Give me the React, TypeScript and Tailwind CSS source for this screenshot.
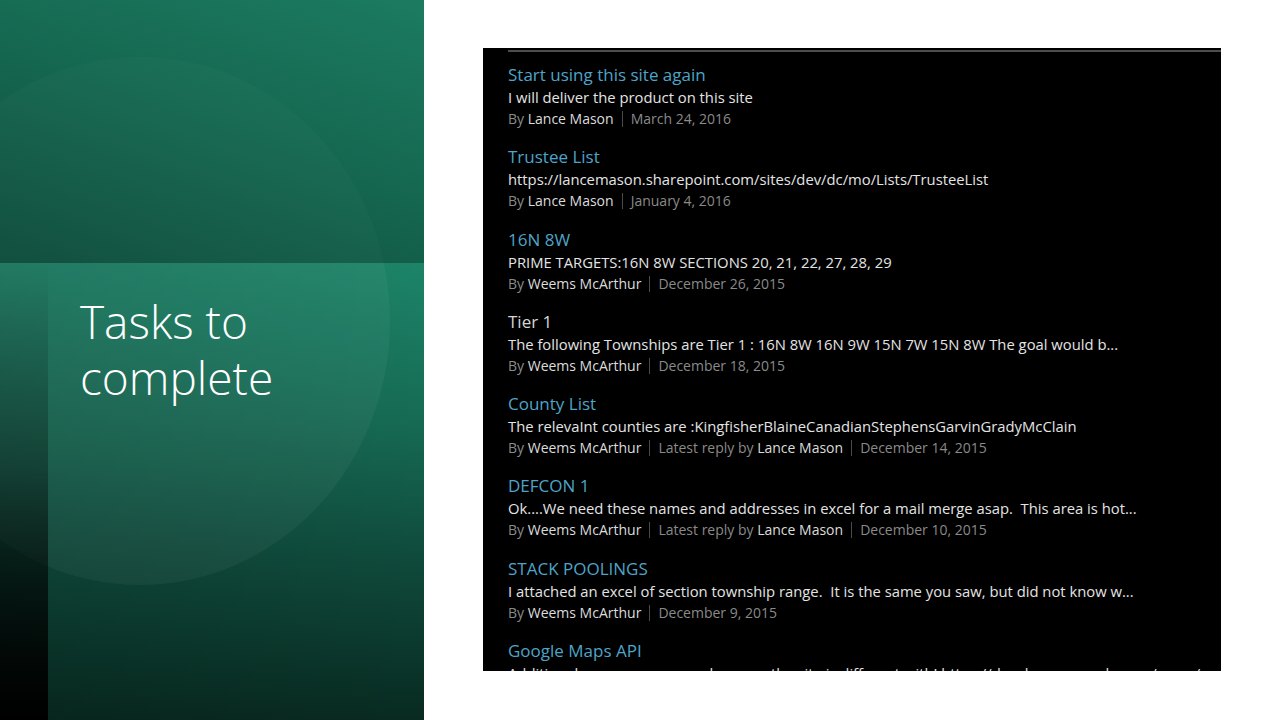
type Post = {
  title: string;
  body: string;
  author: string;
  reply?: string;
  date: string;
  muted?: boolean;
};

const posts: Post[] = [
  {
    title: 'Start using this site again',
    body: 'I will deliver the product on this site',
    author: 'Lance Mason',
    date: 'March 24, 2016',
  },
  {
    title: 'Trustee List',
    body: 'https://lancemason.sharepoint.com/sites/dev/dc/mo/Lists/TrusteeList',
    author: 'Lance Mason',
    date: 'January 4, 2016',
  },
  {
    title: '16N 8W',
    body: 'PRIME TARGETS:16N 8W SECTIONS 20, 21, 22, 27, 28, 29',
    author: 'Weems McArthur',
    date: 'December 26, 2015',
  },
  {
    title: 'Tier 1',
    body: 'The following Townships are Tier 1 : 16N 8W 16N 9W 15N 7W 15N 8W The goal would b...',
    author: 'Weems McArthur',
    date: 'December 18, 2015',
    muted: true,
  },
  {
    title: 'County List',
    body: 'The relevaInt counties are :KingfisherBlaineCanadianStephensGarvinGradyMcClain',
    author: 'Weems McArthur',
    reply: 'Lance Mason',
    date: 'December 14, 2015',
  },
  {
    title: 'DEFCON 1',
    body: 'Ok....We need these names and addresses in excel for a mail merge asap.  This area is hot...',
    author: 'Weems McArthur',
    reply: 'Lance Mason',
    date: 'December 10, 2015',
  },
  {
    title: 'STACK POOLINGS',
    body: 'I attached an excel of section township range.  It is the same you saw, but did not know w...',
    author: 'Weems McArthur',
    date: 'December 9, 2015',
  },
  {
    title: 'Google Maps API',
    body: 'Additional resources on google maps, the site is different with! https://developers.google.com/maps/',
    author: 'Weems McArthur',
    date: 'December 2, 2015',
  },
];

function Divider() {
  return <span className="mx-[8px] inline-block h-[16px] w-px bg-[#4a4a4a]" />;
}

function PostItem({ post }: { post: Post }) {
  return (
    <div className="mb-[16.3px]">
      <div className={`text-[17px] leading-[22px] ${post.muted ? 'text-[#d6d6d6]' : 'text-[#4ea4c9]'}`}>
        {post.title}
      </div>
      <div className="whitespace-pre text-[14.8px] leading-[22px] text-[#e4e4e4]">{post.body}</div>
      <div className="flex items-center text-[14px] leading-[22px] text-[#8a8a8a]">
        <span>
          By <span className="text-[#dcdcdc]">{post.author}</span>
        </span>
        {post.reply && (
          <>
            <Divider />
            <span>
              Latest reply by <span className="text-[#dcdcdc]">{post.reply}</span>
            </span>
          </>
        )}
        <Divider />
        <span>{post.date}</span>
      </div>
    </div>
  );
}

export default function App() {
  return (
    <div className="flex h-[720px] w-[1280px] overflow-hidden bg-white font-['Open_Sans',sans-serif]">
      {/* left title panel */}
      <div className="flex w-[424px] flex-col">
        <div className="relative h-[263px] overflow-hidden bg-[linear-gradient(200deg,#1b7b60_0%,#15664f_50%,#0e4c3c_100%)]">
          <div className="absolute left-[-110px] top-[57px] h-[528px] w-[500px] rounded-[50%] bg-white/[0.018]" />
        </div>
        <div className="relative flex-1 overflow-hidden bg-[linear-gradient(180deg,#1c8468_0%,#166a54_35%,#0f4a3b_65%,#082a21_100%)]">
          <div className="absolute inset-0 bg-[linear-gradient(90deg,rgba(0,0,0,0.12),rgba(0,0,0,0))]" />
          <div className="absolute left-[-110px] top-[-206px] h-[528px] w-[500px] rounded-[50%] bg-white/[0.045]" />
          <div className="absolute bottom-0 left-0 top-0 w-[48px] bg-[linear-gradient(180deg,rgba(0,0,0,0)_0%,rgba(0,0,0,0.3)_45%,rgba(0,0,0,1)_100%)]" />
          <h1 className="relative z-10 pl-[80px] pt-[30px] text-[46px] font-light leading-[56px] text-white">
            Tasks to
            <br />
            complete
          </h1>
        </div>
      </div>

      {/* screenshot of the discussion list */}
      <div className="flex-1 pl-[59px] pt-[48px]">
        <div className="h-[623px] w-[738px] overflow-hidden bg-black pl-[25px] pt-[2px]">
          <div className="h-[2px] bg-[#4d4d4d]" />
          <div className="pt-[12px]">
            {posts.map((post, i) => (
              <PostItem key={i} post={post} />
            ))}
          </div>
        </div>
      </div>
    </div>
  );
}
